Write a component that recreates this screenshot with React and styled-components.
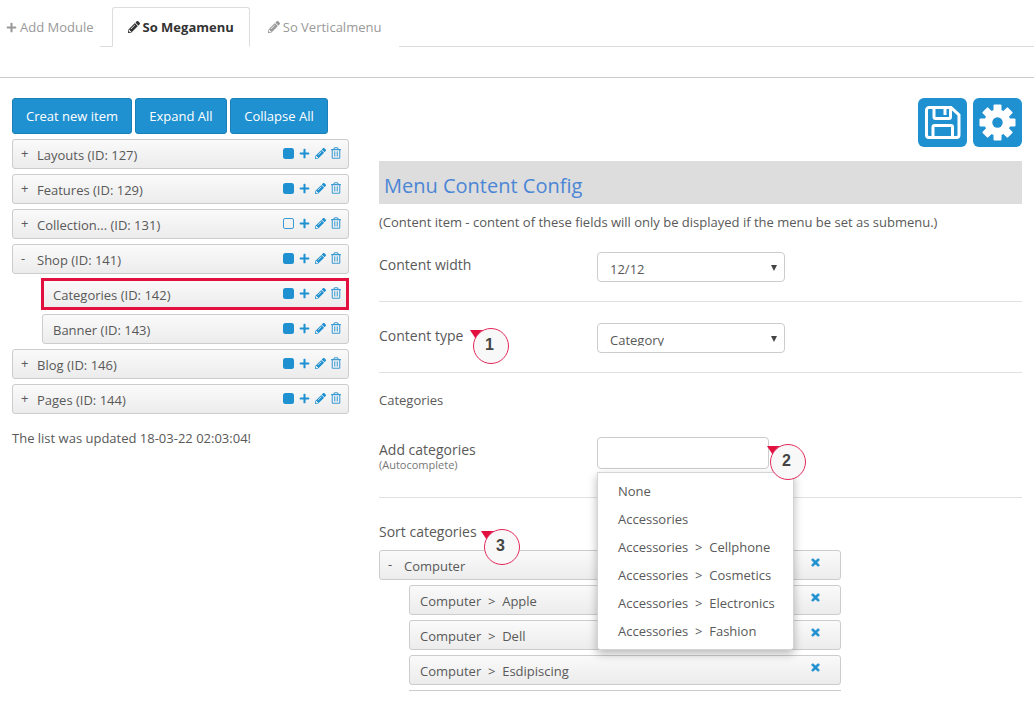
import React from "react";
import styled, { createGlobalStyle } from "styled-components";
import { FaPlus, FaPencilAlt, FaRegTrashAlt, FaTimes } from "react-icons/fa";

const BLUE = "#1f90d0";
const TEXT = "#595959";
const Global = createGlobalStyle`
  html, body { margin: 0; padding: 0; background: #fff; overflow: hidden; }
  body { font-family: "Open Sans", sans-serif; font-size: 13px; color: ${TEXT}; line-height: 18px; }
`;
const Page = styled.div`width: 1034px; height: 704px; overflow: hidden;`;
const TabBar = styled.div`
  display: flex; padding-top: 7px; height: 39px; border-bottom: 1px solid #ddd;
`;
const Tab = styled.div`
  display: flex; align-items: center; gap: 3px; height: 40px; box-sizing: border-box;
  padding: 0 ${p => p.$pad}px; margin-left: ${p => p.$gap || 0}px;
  color: ${p => (p.$active ? "#333" : "#999")};
  font-weight: ${p => (p.$active ? 700 : 400)};
  background: #fff;
  border: 1px solid ${p => (p.$active ? "#ddd" : "transparent")};
  border-bottom-color: ${p => (p.$active ? "#fff" : "transparent")};
  border-radius: 3px 3px 0 0;
`;
const TabPlus = styled(FaPlus)`width: 11px; height: 11px;`;
const TabPen = styled(FaPencilAlt)`width: 12px; height: 12px;`;
const SubLine = styled.div`height: 30px; border-bottom: 1px solid #ccc;`;
const Columns = styled.div`
  display: grid; grid-template-columns: 337px 643px; column-gap: 30px;
  padding: 20px 0 0 12px;
`;
const Left = styled.div`display: flex; flex-direction: column;`;
const Buttons = styled.div`display: flex; gap: 3px; margin-bottom: 5px;`;
const Btn = styled.button`
  height: 36px; width: ${p => p.$w}px; padding: 0; border: 1px solid #1b7fb8; border-radius: 3px;
  background: ${BLUE}; color: #fff; font: 13px "Open Sans", sans-serif;
`;
const Tree = styled.div`display: flex; flex-direction: column; gap: 5px;`;
const Item = styled.div`
  display: flex; align-items: center; height: 30px; box-sizing: border-box;
  margin-left: ${p => p.$indent || 0}px;
  padding: 0 7px 0 ${p => (p.$indent ? 10 : 8)}px;
  border: 1px solid #ccc; border-radius: 3px;
  background: linear-gradient(#fafafa, #ececec);
  ${p => p.$selected && `
    border: 3px solid #e2103f; border-radius: 0;
    margin: -1px 0 -1px ${p.$indent - 1}px; padding: 0 5px 0 9px; height: 32px;
  `}
`;
const Toggle = styled.span`width: 16px; font-size: 13px; color: ${TEXT}; margin-top: -3px;`;
const ItemLabel = styled.span`flex: 1; white-space: pre; padding-top: 1px;`;
const Actions = styled.span`
  display: flex; align-items: center; gap: 5px; color: ${BLUE}; margin-top: -2px;
`;
const SquareSvg = styled.svg`width: 11px; height: 11px; display: block;`;
const PlusIcon = styled(FaPlus)`width: 11px; height: 11px;`;
const PenIcon = styled(FaPencilAlt)`width: 11px; height: 11px;`;
const TrashIcon = styled(FaRegTrashAlt)`width: 10px; height: 12px; color: #3d9bd3;`;
const Status = styled.div`margin-top: 15px;`;
const Right = styled.div`display: flex; flex-direction: column;`;
const Toolbar = styled.div`display: flex; justify-content: flex-end; gap: 6px;`;
const IconBtn = styled.div`
  width: 49px; height: 49px; border-radius: 6px; background: ${BLUE};
  display: flex; align-items: center; justify-content: center;
`;
const Title = styled.h2`
  margin: 14px 0 0; height: 43px; box-sizing: border-box; padding: 12px 0 0 5px;
  background: #ddd; color: #4a86d6; font-size: 20px; font-weight: 400; line-height: 26px;
`;
const Note = styled.p`margin: 9px 0 0; line-height: 18px; height: 39px;`;
const Field = styled.div`
  display: grid; grid-template-columns: 218px 1fr; align-items: start;
  padding: ${p => p.$top}px 0 ${p => p.$bottom}px;
  border-bottom: ${p => (p.$line ? "1px solid #e0e0e0" : "none")};
`;
const FieldLabel = styled.label`
  position: relative; font-size: 14px; line-height: 20px; display: block; margin-top: ${p => p.$mt || 0}px;
`;
const SectionLabel = styled.span`font-size: 13px; line-height: 20px; display: block;`;
const Hint = styled.small`display: block; font-size: 11px; line-height: 10px; color: #777;`;
const Select = styled.div`
  display: flex; justify-content: space-between; width: 188px; height: 30px; box-sizing: border-box;
  border: 1px solid #ccc; border-radius: 4px; padding: 7px 7px 0 12px; background: #fff;
`;
const SelectText = styled.span`display: block; height: 15px; overflow: hidden; line-height: 18px; font-size: 13px; color: ${TEXT};`;
const Caret = styled.span`
  width: 0; height: 0; margin-top: 5px; border: 3px solid transparent; border-top: 6px solid #444; border-bottom: 0;
`;
const AutoWrap = styled.div`position: relative; width: 172px;`;
const Input = styled.div`
  height: 32px; box-sizing: border-box; border: 1px solid #ccc; border-radius: 4px; background: #fff;
`;
const Dropdown = styled.ul`
  position: absolute; z-index: 5; top: 35px; left: 0; width: 197px; height: 178px; box-sizing: border-box;
  margin: 0; padding: 5px 0; list-style: none; background: #fff;
  border: 1px solid #d4d4d4; border-radius: 0 0 3px 3px; box-shadow: 0 4px 10px rgba(0,0,0,.28);
`;
const Option = styled.li`
  height: 28px; line-height: 27px; padding-left: 20px; white-space: pre; color: ${TEXT};
`;
const Marker = styled.span`
  position: absolute; z-index: 6; left: ${p => p.$x}px; top: ${p => p.$y}px;
  width: 36px; height: 36px; box-sizing: border-box;
  font: 700 16px/34px "Liberation Sans", sans-serif; color: #444; text-align: center; text-indent: -3px;
  &::after {
    content: ""; position: absolute; z-index: -1; inset: 0; border-radius: 50%;
    border: 1px solid #e2285a; background: #f8f8f8;
  }
  &::before {
    content: ""; position: absolute; z-index: -2; left: -3px; top: 2px; width: 13px; height: 12px;
    background: #e2103f; clip-path: polygon(0 0, 100% 0, 60% 100%);
  }
`;
const SortLabel = styled.div`position: relative; font-size: 14px; line-height: 20px; padding-top: 24px; margin-bottom: 8px;`;
const SortList = styled.div`display: flex; flex-direction: column; gap: 5px; width: 462px;`;
const SortRow = styled(Item)`padding-right: 19px;`;
const SortRemove = styled(FaTimes)`
  width: 11px; height: 11px; color: ${BLUE}; margin-top: -5px; stroke: currentColor; stroke-width: 40;
`;
const CutRow = styled.div`margin-left: 30px; border-top: 1px solid #ccc;`;

const SquareGlyph = ({ open }) => (
  <SquareSvg viewBox="0 0 11 11">
    {open
      ? <rect x="0.5" y="0.5" width="10" height="10" rx="1.5" fill="none" stroke="#3d9bd3" />
      : <rect width="11" height="11" rx="2.5" fill="currentColor" />}
  </SquareSvg>
);
const SaveGlyph = () => (
  <svg width="36" height="35" viewBox="0 0 36 35" fill="none" stroke="#fff" strokeWidth="3">
    <path d="M4 2.5H26L34 10V30a2.5 2.5 0 0 1-2.5 2.5H4A2.5 2.5 0 0 1 1.500 30V5A2.500 2.500 0 0 1 4 2.500z" />
    <path d="M9 3V12a1.500 1.500 0 0 0 1.500 1.500H24a1.500 1.500 0 0 0 1.500-1.500V3" />
    <path d="M20 4V10" />
    <path d="M8 32V22a1.500 1.500 0 0 1 1.500-1.500H26a1.500 1.500 0 0 1 1.500 1.500V32" />
  </svg>
);
const CogGlyph = () => (
  <svg width="37" height="37" viewBox="-18.500 -18.500 37 37">
    <circle r="13" fill="#fff" />
    {[0, 45, 90, 135, 180, 225, 270, 315].map(a => (
      <rect key={a} x="-4" y="-18" width="8" height="10" rx="1" fill="#fff" transform={`rotate(${a})`} />
    ))}
    <circle r="5.200" fill={BLUE} />
  </svg>
);

const tree = [
  { label: "Layouts (ID: 127)", t: "+" },
  { label: "Features (ID: 129)", t: "+" },
  { label: "Collection... (ID: 131)", t: "+", open: true },
  { label: "Shop (ID: 141)", t: "-" },
  { label: "Categories (ID: 142)", indent: 30, selected: true },
  { label: "Banner (ID: 143)", indent: 30 },
  { label: "Blog (ID: 146)", t: "+" },
  { label: "Pages (ID: 144)", t: "+" },
];
const options = ["None", "Accessories", "Accessories  >  Cellphone", "Accessories  >  Cosmetics", "Accessories  >  Electronics", "Accessories  >  Fashion"];
const sorts = [
  { label: "Computer", t: "-" },
  { label: "Computer  >  Apple", indent: 30 },
  { label: "Computer  >  Dell", indent: 30 },
  { label: "Computer  >  Esdipiscing", indent: 30 },
];

export default function App() {
  return (
    <Page>
      <Global />
      <TabBar>
        <Tab $pad={5}><TabPlus />Add Module</Tab>
        <Tab $pad={15} $gap={12} $active><TabPen />So Megamenu</Tab>
        <Tab $pad={17}><TabPen />So Verticalmenu</Tab>
      </TabBar>
      <SubLine />
      <Columns>
        <Left>
          <Buttons>
            <Btn $w={120}>Creat new item</Btn>
            <Btn $w={92}>Expand All</Btn>
            <Btn $w={98}>Collapse All</Btn>
          </Buttons>
          <Tree>
            {tree.map(i => (
              <Item key={i.label} $indent={i.indent} $selected={i.selected}>
                {i.t && <Toggle>{i.t}</Toggle>}
                <ItemLabel>{i.label}</ItemLabel>
                <Actions>
                  <SquareGlyph open={i.open} />
                  <PlusIcon />
                  <PenIcon />
                  <TrashIcon />
                </Actions>
              </Item>
            ))}
          </Tree>
          <Status>The list was updated 18-03-22 02:03:04!</Status>
        </Left>
        <Right>
          <Toolbar>
            <IconBtn><SaveGlyph /></IconBtn>
            <IconBtn><CogGlyph /></IconBtn>
          </Toolbar>
          <Title>Menu Content Config</Title>
          <Note>(Content item - content of these fields will only be displayed if the menu be set as submenu.)</Note>
          <Field $top={0} $bottom={19} $line>
            <FieldLabel $mt={3}>Content width</FieldLabel>
            <Select><SelectText>12/12</SelectText><Caret /></Select>
          </Field>
          <Field $top={21} $bottom={19} $line>
            <FieldLabel $mt={3}>
              Content type
              <Marker $x={94} $y={2}>1</Marker>
            </FieldLabel>
            <Select><SelectText>Category</SelectText><Caret /></Select>
          </Field>
          <Field $top={17} $bottom={19}>
            <SectionLabel>Categories</SectionLabel>
          </Field>
          <Field $top={8} $bottom={27} $line>
            <FieldLabel $mt={3}>
              Add categories
              <Hint>(Autocomplete)</Hint>
            </FieldLabel>
            <AutoWrap>
              <Input />
              <Marker $x={173} $y={7}>2</Marker>
              <Dropdown>
                {options.map(o => <Option key={o}>{o}</Option>)}
              </Dropdown>
            </AutoWrap>
          </Field>
          <SortLabel>
            Sort categories
            <Marker $x={105} $y={31}>3</Marker>
          </SortLabel>
          <SortList>
            {sorts.map(s => (
              <SortRow key={s.label} $indent={s.indent}>
                {s.t && <Toggle>{s.t}</Toggle>}
                <ItemLabel>{s.label}</ItemLabel>
                <SortRemove />
              </SortRow>
            ))}
            <CutRow />
          </SortList>
        </Right>
      </Columns>
    </Page>
  );
}
